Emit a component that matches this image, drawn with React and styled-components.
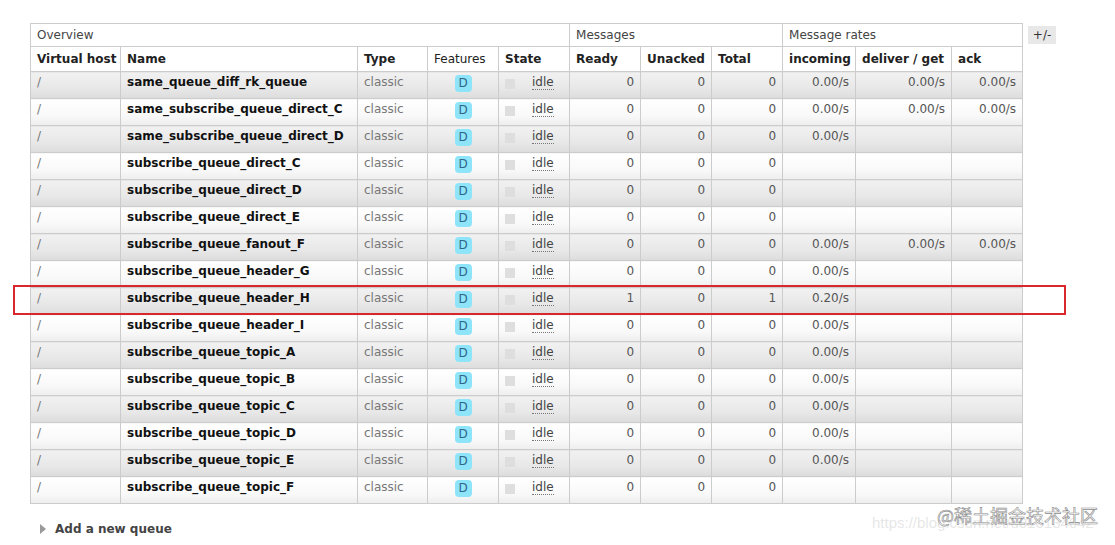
import React from "react";
import styled, { createGlobalStyle } from "styled-components";

const GlobalStyle = createGlobalStyle`
  html, body { margin: 0; padding: 0; background: #fff; }
  body { font-family: "DejaVu Sans", Verdana, sans-serif; font-size: 12px; color: #333; }
`;

const Page = styled.div`
  position: relative;
  width: 1115px;
  height: 545px;
  box-sizing: border-box;
  padding: 23px 0 0 30px;
  overflow: hidden;
`;

const TableRow = styled.div`
  display: flex;
  align-items: flex-start;
  gap: 5px;
`;

const Table = styled.table`
  border-collapse: collapse;
  table-layout: fixed;
  width: 993px;
  border: 1px solid #ccc;
`;

const GroupTh = styled.th`
  font-weight: normal;
  text-align: left;
  color: #444;
  line-height: 15px;
  height: 15px;
  padding: 4px 6px 3px;
  border: 1px solid #ccc;
  background: #fff;
  white-space: nowrap;
`;

const Th = styled.th`
  font-weight: ${(p) => (p.$normal ? "normal" : "bold")};
  text-align: left;
  color: #222;
  line-height: 15px;
  height: 15px;
  padding: 5px 6px 4px;
  border: 1px solid #ccc;
  background: #fff;
  white-space: nowrap;
`;

const Tr = styled.tr`
  & > td {
    background: ${(p) =>
      p.$alt
        ? "linear-gradient(to bottom, #f1f1f1 0%, #e8e8e8 60%, #dcdcdc 100%)"
        : "linear-gradient(to bottom, #ffffff 0%, #f9f9f9 60%, #eeeeee 100%)"};
  }
`;

const Td = styled.td`
  line-height: 15px;
  height: 15px;
  padding: 3px 6px 8px;
  border: 1px solid #ccc;
  white-space: nowrap;
  overflow: hidden;
  vertical-align: top;
  text-align: ${(p) => (p.$right ? "right" : p.$center ? "center" : "left")};
  color: ${(p) => (p.$strong ? "#111" : p.$muted ? "#777" : "#555")};
  font-weight: ${(p) => (p.$strong ? "bold" : "normal")};
`;

const Badge = styled.span`
  display: inline-block;
  width: 17px;
  height: 17px;
  line-height: 17px;
  margin-bottom: -2px;
  border-radius: 4px;
  background: #8ee4f8;
  color: #2f6688;
  font-size: 12px;
  text-align: center;
  vertical-align: top;
`;

const StateCell = styled.div`
  display: flex;
  align-items: center;
  gap: 17px;
  height: 15px;
`;

const StateDot = styled.span`
  width: 10px;
  height: 10px;
  margin-top: 2px;
  background: #dedede;
  flex: none;
`;

const Idle = styled.abbr`
  text-decoration: none;
  border-bottom: 1px dotted #777;
  color: #444;
  line-height: 14px;
`;

const ToggleButton = styled.span`
  margin-top: 3px;
  width: 28px;
  height: 18px;
  line-height: 18px;
  background: #e8e8e8;
  color: #333;
  text-align: center;
  font-size: 12px;
`;

const AddQueue = styled.div`
  display: flex;
  align-items: center;
  gap: 9px;
  margin: 17px 0 0 10px;
  font-weight: bold;
  color: #444;
  line-height: 16px;
`;

const Arrow = styled.span`
  width: 0;
  height: 0;
  border-top: 5px solid transparent;
  border-bottom: 5px solid transparent;
  border-left: 6px solid #999;
`;

const Highlight = styled.div`
  position: absolute;
  left: 13px;
  top: 285px;
  width: 1049px;
  height: 26px;
  border: 2px solid #d8272d;
  pointer-events: none;
`;

const WatermarkUrl = styled.div`
  position: absolute;
  left: 872px;
  top: 514px;
  font-family: "Liberation Sans", Arial, sans-serif;
  font-size: 15px;
  color: rgba(200, 200, 200, 0.45);
  white-space: nowrap;
`;

const WatermarkBrand = styled.div`
  position: absolute;
  left: 937px;
  top: 503px;
  font-family: "Noto Sans CJK SC", "DejaVu Sans", sans-serif;
  font-size: 18px;
  line-height: 24px;
  color: #fff;
  -webkit-text-stroke: 0.6px #8a8a8a;
  white-space: nowrap;
`;

const rows = [
  ["same_queue_diff_rk_queue", 0, 0, 0, ["0.00/s", "0.00/s", "0.00/s"]],
  ["same_subscribe_queue_direct_C", 0, 0, 0, ["0.00/s", "0.00/s", "0.00/s"]],
  ["same_subscribe_queue_direct_D", 0, 0, 0, ["0.00/s", "", ""]],
  ["subscribe_queue_direct_C", 0, 0, 0, ["", "", ""]],
  ["subscribe_queue_direct_D", 0, 0, 0, ["", "", ""]],
  ["subscribe_queue_direct_E", 0, 0, 0, ["", "", ""]],
  ["subscribe_queue_fanout_F", 0, 0, 0, ["0.00/s", "0.00/s", "0.00/s"]],
  ["subscribe_queue_header_G", 0, 0, 0, ["0.00/s", "", ""]],
  ["subscribe_queue_header_H", 1, 0, 1, ["0.20/s", "", ""]],
  ["subscribe_queue_header_I", 0, 0, 0, ["0.00/s", "", ""]],
  ["subscribe_queue_topic_A", 0, 0, 0, ["0.00/s", "", ""]],
  ["subscribe_queue_topic_B", 0, 0, 0, ["0.00/s", "", ""]],
  ["subscribe_queue_topic_C", 0, 0, 0, ["0.00/s", "", ""]],
  ["subscribe_queue_topic_D", 0, 0, 0, ["0.00/s", "", ""]],
  ["subscribe_queue_topic_E", 0, 0, 0, ["0.00/s", "", ""]],
  ["subscribe_queue_topic_F", 0, 0, 0, ["", "", ""]],
];

const colWidths = [90, 237, 70, 71, 71, 71, 71, 71, 73, 96, 71];

export default function App() {
  return (
    <>
      <GlobalStyle />
      <Page>
        <TableRow>
          <Table>
            <colgroup>
              {colWidths.map((w, i) => (
                <col key={i} style={{ width: w }} />
              ))}
            </colgroup>
            <thead>
              <tr>
                <GroupTh colSpan={5}>Overview</GroupTh>
                <GroupTh colSpan={3}>Messages</GroupTh>
                <GroupTh colSpan={3}>Message rates</GroupTh>
              </tr>
              <tr>
                <Th>Virtual host</Th>
                <Th>Name</Th>
                <Th>Type</Th>
                <Th $normal>Features</Th>
                <Th>State</Th>
                <Th>Ready</Th>
                <Th>Unacked</Th>
                <Th>Total</Th>
                <Th>incoming</Th>
                <Th>deliver / get</Th>
                <Th>ack</Th>
              </tr>
            </thead>
            <tbody>
              {rows.map(([name, ready, unacked, total, rates], i) => (
                <Tr key={name} $alt={i % 2 === 0}>
                  <Td $muted>/</Td>
                  <Td $strong>{name}</Td>
                  <Td $muted>classic</Td>
                  <Td $center>
                    <Badge>D</Badge>
                  </Td>
                  <Td>
                    <StateCell>
                      <StateDot />
                      <Idle>idle</Idle>
                    </StateCell>
                  </Td>
                  <Td $right>{ready}</Td>
                  <Td $right>{unacked}</Td>
                  <Td $right>{total}</Td>
                  {rates.map((r, j) => (
                    <Td key={j} $right>
                      {r}
                    </Td>
                  ))}
                </Tr>
              ))}
            </tbody>
          </Table>
          <ToggleButton>+/-</ToggleButton>
        </TableRow>
        <AddQueue>
          <Arrow />
          Add a new queue
        </AddQueue>
        <Highlight />
        <WatermarkUrl>https://blog.csdn.net/u010134642</WatermarkUrl>
        <WatermarkBrand>@稀土掘金技术社区</WatermarkBrand>
      </Page>
    </>
  );
}
